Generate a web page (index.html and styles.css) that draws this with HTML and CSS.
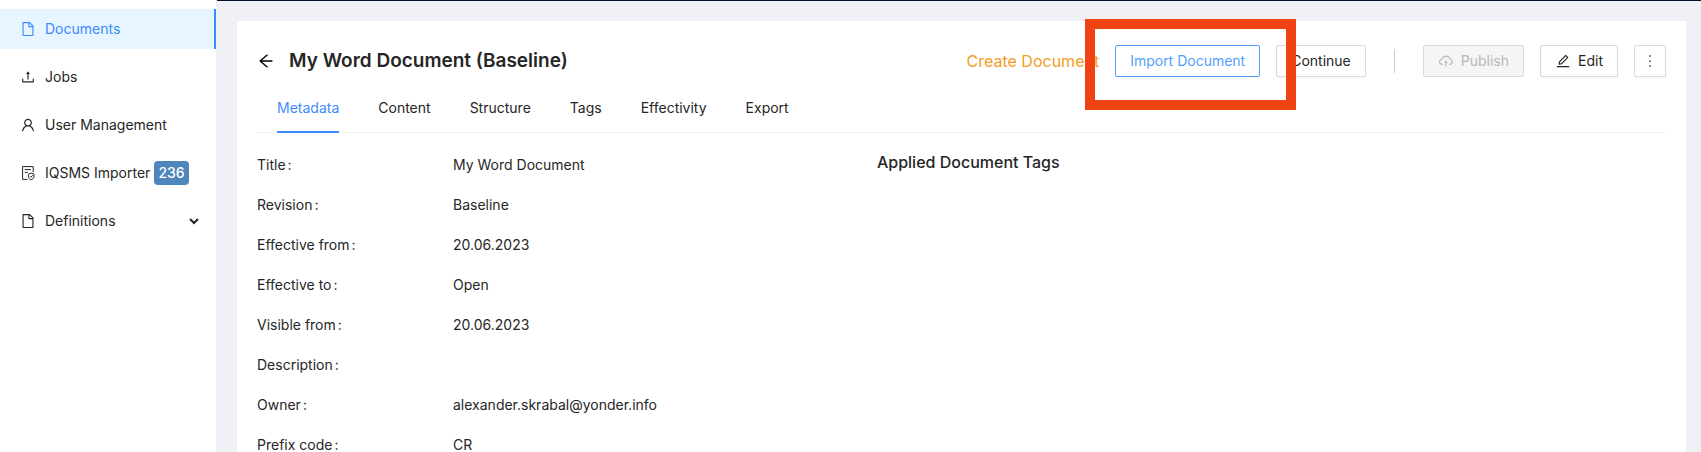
FILE: index.html
```html
<!DOCTYPE html>
<html lang="en">
<head>
  <meta charset="UTF-8">
  <meta name="viewport" content="width=device-width, initial-scale=1.0">
  <title>My Word Document (Baseline)</title>
  <link rel="stylesheet" href="styles.css">
</head>
<body>
  <div class="layout">
    <nav class="sidebar">
      <a class="menu-item active" href="#documents">
        <svg class="icon" viewBox="0 0 1024 1024"><path d="M854.6 288.6L639.4 73.4c-6-6-14.1-9.4-22.6-9.4H192c-17.7 0-32 14.3-32 32v832c0 17.7 14.3 32 32 32h640c17.7 0 32-14.3 32-32V311.3c0-8.5-3.4-16.7-9.4-22.7zM790.2 326H602V137.8L790.2 326zm1.8 562H232V136h302v216a42 42 0 0 0 42 42h216v494z"/></svg>
        <span>Documents</span>
      </a>
      <a class="menu-item" href="#jobs">
        <svg class="icon" viewBox="0 0 1024 1024"><path d="M400 317.7h73.9V656c0 4.4 3.6 8 8 8h60c4.4 0 8-3.6 8-8V317.7H624c6.7 0 10.4-7.7 6.3-12.9L518.3 163a8 8 0 0 0-12.6 0l-112 141.7c-4.1 5.3-.4 13 6.3 13zM878 626h-60c-4.4 0-8 3.6-8 8v154H214V634c0-4.4-3.6-8-8-8h-60c-4.4 0-8 3.6-8 8v198c0 17.7 14.3 32 32 32h684c17.7 0 32-14.3 32-32V634c0-4.4-3.6-8-8-8z"/></svg>
        <span>Jobs</span>
      </a>
      <a class="menu-item" href="#users">
        <svg class="icon" viewBox="0 0 1024 1024"><path d="M858.5 763.6a374 374 0 0 0-80.6-119.5 375.63 375.63 0 0 0-119.5-80.6c-.4-.2-.8-.3-1.2-.5C719.5 518 760 444.7 760 362c0-137-111-248-248-248S264 225 264 362c0 82.7 40.5 156 102.8 201.1-.4.2-.8.3-1.2.5-44.8 18.9-85 46-119.5 80.6a375.63 375.63 0 0 0-80.6 119.5A371.7 371.7 0 0 0 136 901.8a8 8 0 0 0 8 8.2h60c4.4 0 7.9-3.5 8-7.8 2-77.2 33-149.5 87.8-204.3 56.7-56.7 132-87.9 212.2-87.9s155.5 31.2 212.2 87.9C779 752.7 810 825 812 902.2c.1 4.4 3.6 7.8 8 7.8h60a8 8 0 0 0 8-8.2c-1-47.8-10.9-94.3-29.5-138.2zM512 534c-45.9 0-89.1-17.9-121.6-50.4S340 407.9 340 362c0-45.9 17.9-89.1 50.4-121.6S466.1 190 512 190s89.1 17.9 121.6 50.4S684 316.1 684 362c0 45.9-17.9 89.1-50.4 121.6S557.9 534 512 534z"/></svg>
        <span>User Management</span>
      </a>
      <a class="menu-item" href="#importer">
        <svg class="icon line" viewBox="0 0 16 16">
          <path d="M13.2 7.2V1.6H2.6v12.8h5M4.8 4.6h6.2M4.8 7.4h3"/>
          <path d="M11.2 8.2l2.8 1v2.6c0 1.4-1.3 2.3-2.8 3-1.5-.7-2.8-1.6-2.8-3V9.2zM9.9 11.2l1 1 1.8-1.9"/>
        </svg>
        <span>IQSMS Importer</span>
        <span class="badge">236</span>
      </a>
      <a class="menu-item" href="#definitions">
        <svg class="icon" viewBox="0 0 1024 1024"><path d="M854.6 288.6L639.4 73.4c-6-6-14.1-9.4-22.6-9.4H192c-17.7 0-32 14.3-32 32v832c0 17.7 14.3 32 32 32h640c17.7 0 32-14.3 32-32V311.3c0-8.5-3.4-16.7-9.4-22.7zM790.2 326H602V137.8L790.2 326zm1.8 562H232V136h302v216a42 42 0 0 0 42 42h216v494z"/></svg>
        <span>Definitions</span>
        <svg class="chevron" viewBox="0 0 10 10"><path d="M1 3l4 4 4-4"/></svg>
      </a>
    </nav>

    <main class="main">
      <section class="card">
        <header class="page-header">
          <button class="back" aria-label="Back">
            <svg viewBox="0 0 1024 1024"><path d="M872 474H286.9l350.2-304c5.6-4.9 2.2-14-5.2-14h-88.5c-3.9 0-7.6 1.4-10.5 3.9L155 487.8a31.96 31.96 0 0 0 0 48.3L535.1 866c1.5 1.3 3.3 2 5.2 2h91.5c7.4 0 10.8-9.2 5.2-14L286.9 550H872c4.4 0 8-3.6 8-8v-60c0-4.4-3.6-8-8-8z"/></svg>
          </button>
          <h1>My Word Document (Baseline)</h1>
          <div class="actions">
            <span class="status">Create Document</span>
            <div class="highlighted">
              <button class="btn primary">Import Document</button>
              <div class="highlight"></div>
            </div>
            <button class="btn">Continue</button>
            <span class="divider"></span>
            <button class="btn" disabled>
              <svg class="icon" viewBox="0 0 1024 1024"><path d="M518.3 459a8 8 0 0 0-12.6 0l-112 141.7a7.98 7.98 0 0 0 6.3 12.9h73.9V856c0 4.4 3.6 8 8 8h60c4.4 0 8-3.6 8-8V613.7H624c6.7 0 10.4-7.7 6.3-12.9L518.3 459z"/><path d="M811.4 366.7C765.6 245.9 648.9 160 512.2 160S258.8 245.8 213 366.6C127.3 389.1 64 467.2 64 560c0 110.5 89.5 200 199.9 200H304c4.4 0 8-3.6 8-8v-60c0-4.4-3.6-8-8-8h-40.1c-33.7 0-65.4-13.4-89-37.7-23.5-24.2-36-56.8-34.9-90.6.9-26.4 9.9-51.2 26.2-72.1 16.7-21.3 40.1-36.8 66.1-43.7l37.9-9.9 13.9-36.6c8.6-22.8 20.6-44.1 35.7-63.4a245.6 245.6 0 0 1 52.4-49.9c41.1-28.9 89.5-44.2 140-44.2s98.9 15.3 140 44.2c19.9 14 37.5 30.8 52.4 49.9 15.1 19.3 27.1 40.7 35.7 63.4l13.8 36.5 37.8 10C846.1 454.5 884 503.8 884 560c0 33.1-12.9 64.3-36.3 87.7a123.07 123.07 0 0 1-87.6 36.3H720c-4.4 0-8 3.6-8 8v60c0 4.4 3.6 8 8 8h40.1C870.5 760 960 670.5 960 560c0-92.7-63.1-170.7-148.6-193.3z"/></svg>
              Publish
            </button>
            <button class="btn">
              <svg class="icon" viewBox="0 0 1024 1024"><path d="M257.7 752c2 0 4-.2 6-.5L431.9 722c2-.4 3.9-1.3 5.3-2.8l423.9-423.9a9.96 9.96 0 0 0 0-14.1L694.9 114.9c-1.9-1.9-4.4-2.9-7.1-2.9s-5.2 1-7.1 2.9L256.8 538.8c-1.5 1.5-2.4 3.3-2.8 5.3l-29.5 168.2a33.5 33.5 0 0 0 9.4 29.8c6.6 6.4 14.9 9.9 23.8 9.9zm67.4-174.4L687.8 215l73.3 73.3-362.7 362.6-88.9 15.7 15.6-89zM880 836H144c-17.7 0-32 14.3-32 32v36c0 4.4 3.6 8 8 8h784c4.4 0 8-3.6 8-8v-36c0-17.7-14.3-32-32-32z"/></svg>
              Edit
            </button>
            <button class="btn more" aria-label="More">
              <svg class="icon" viewBox="0 0 16 16"><path d="M7 2h2v2H7zM7 7h2v2H7zM7 12h2v2H7z"/></svg>
            </button>
          </div>
        </header>

        <nav class="tabs">
          <a class="tab active" href="#metadata">Metadata</a>
          <a class="tab" href="#content">Content</a>
          <a class="tab" href="#structure">Structure</a>
          <a class="tab" href="#tags">Tags</a>
          <a class="tab" href="#effectivity">Effectivity</a>
          <a class="tab" href="#export">Export</a>
        </nav>

        <div class="details">
          <dl class="metadata">
            <dt>Title</dt><dd>My Word Document</dd>
            <dt>Revision</dt><dd>Baseline</dd>
            <dt>Effective from</dt><dd>20.06.2023</dd>
            <dt>Effective to</dt><dd>Open</dd>
            <dt>Visible from</dt><dd>20.06.2023</dd>
            <dt>Description</dt><dd></dd>
            <dt>Owner</dt><dd>alexander.skrabal@yonder.info</dd>
            <dt>Prefix code</dt><dd>CR</dd>
          </dl>
          <h2>Applied Document Tags</h2>
        </div>
      </section>
    </main>
  </div>
</body>
</html>
```
FILE: styles.css
```css
* {
  box-sizing: border-box;
}
body {
  margin: 0;
  font-family: Inter, "Liberation Sans", sans-serif;
  font-size: 14px;
  line-height: 22px;
  color: #262626;
  background: #fff;
}
a {
  color: inherit;
  text-decoration: none;
}
h1, h2, dl, dd {
  margin: 0;
}
.layout {
  display: flex;
  height: 100vh;
  overflow: hidden;
}
.icon {
  width: 16px;
  height: 16px;
  flex: none;
  fill: currentColor;
}
.icon.line {
  fill: none;
  stroke: currentColor;
}

/* sidebar */
.sidebar {
  width: 217px;
  flex: none;
  display: flex;
  flex-direction: column;
  gap: 8px;
  padding-top: 9px;
  border-right: 1px solid #f0f0f0;
}
.menu-item {
  display: flex;
  align-items: center;
  height: 40px;
  padding: 0 17px 0 20px;
}
.menu-item .icon {
  margin-right: 9px;
}
.menu-item.active {
  color: #3d8bfd;
  background: #e6f5ff;
  border-right: 2px solid #3d8bfd;
}
.badge {
  margin-left: 4px;
  padding: 1px 4px;
  border-radius: 4px;
  color: #fff;
  background: #4f86bb;
  font-weight: 500;
}
.chevron {
  width: 10px;
  height: 10px;
  margin-left: auto;
  fill: none;
  stroke: currentColor;
  stroke-width: 2;
}

/* content */
.main {
  flex: 1;
  min-width: 0;
  padding: 20px 15px 0 20px;
  background: #f0f1f6;
  border-top: 1px solid #001129;
}
.card {
  min-height: 100%;
  padding: 24px 20px;
  background: #fff;
}
.page-header {
  display: flex;
  align-items: center;
}
.back {
  display: flex;
  margin-right: 14px;
  padding: 0;
  border: 0;
  background: none;
  cursor: pointer;
}
.back svg {
  width: 18px;
  height: 18px;
}
h1 {
  font-size: 19px;
  font-weight: 600;
  line-height: 32px;
}
h2 {
  font-size: 16px;
  font-weight: 500;
  line-height: 22px;
}
.actions {
  display: flex;
  align-items: center;
  gap: 16px;
  margin-left: auto;
}
.status {
  font-size: 16px;
  color: #f39c1f;
}
.btn {
  display: flex;
  align-items: center;
  justify-content: center;
  gap: 7px;
  height: 32px;
  padding: 0 14px;
  border: 1px solid #d9d9d9;
  border-radius: 2px;
  background: #fff;
  box-shadow: 0 2px 0 rgba(0, 0, 0, 0.02);
  color: #262626;
  font: inherit;
  cursor: pointer;
}
.btn:disabled {
  color: #b8b8b8;
  background: #f5f5f5;
  box-shadow: none;
  cursor: not-allowed;
}
.btn.primary {
  color: #549ffb;
  border-color: #549ffb;
}
.btn.more {
  width: 32px;
  padding: 0;
  color: #8c8c8c;
}
.divider {
  width: 1px;
  height: 24px;
  margin: 0 12px;
  background: #ccc;
}
.highlighted {
  position: relative;
}
.highlight {
  position: absolute;
  z-index: 1;
  top: -26px;
  right: -36px;
  bottom: -33px;
  left: -30px;
  border: 10px solid #f04314;
  pointer-events: none;
}

.tabs {
  display: flex;
  gap: 39px;
  margin-top: 8px;
  padding: 0 20px;
  border-bottom: 1px solid #f0f0f0;
}
.tab {
  margin-bottom: -1px;
  padding: 12px 0;
  border-bottom: 2px solid transparent;
}
.tab.active {
  color: #3d8bfd;
  border-bottom-color: #3d8bfd;
}

.details {
  display: grid;
  grid-template-columns: 44% 1fr;
  align-items: start;
  padding-top: 18px;
}
.metadata {
  display: grid;
  grid-template-columns: 196px 1fr;
  grid-auto-rows: 22px;
  row-gap: 18px;
  padding-top: 3px;
}
.metadata dt::after {
  content: ":";
  margin-left: 2px;
}
```
